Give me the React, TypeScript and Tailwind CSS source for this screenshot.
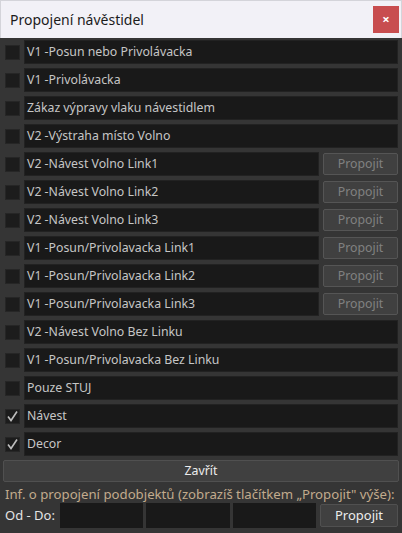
const rows = [
  { label: "V1 -Posun nebo Privolávacka" },
  { label: "V1 -Privolávacka" },
  { label: "Zákaz výpravy vlaku návestidlem" },
  { label: "V2 -Výstraha místo Volno" },
  { label: "V2 -Návest Volno Link1", link: true },
  { label: "V2 -Návest Volno Link2", link: true },
  { label: "V2 -Návest Volno Link3", link: true },
  { label: "V1 -Posun/Privolavacka Link1", link: true },
  { label: "V1 -Posun/Privolavacka Link2", link: true },
  { label: "V1 -Posun/Privolavacka Link3", link: true },
  { label: "V2 -Návest Volno Bez Linku" },
  { label: "V1 -Posun/Privolavacka Bez Linku" },
  { label: "Pouze STUJ" },
  { label: "Návest", checked: true },
  { label: "Decor", checked: true },
];

function Check({ checked }: { checked?: boolean }) {
  return (
    <div className="flex h-[15px] w-[15px] shrink-0 items-center justify-center bg-[#1c1c1c] shadow-[inset_0_0_0_1px_#262626]">
      {checked && (
        <svg width="13" height="13" viewBox="0 0 13 13">
          <path d="M2 6.5 L5 10.5 L11 1.5" fill="none" stroke="#bdbdbd" strokeWidth="1.6" />
        </svg>
      )}
    </div>
  );
}

export default function App() {
  return (
    <div
      className="flex h-[533px] w-[402px] flex-col overflow-hidden bg-[#353535] text-[12.3px] text-[#c6c6c6]"
      style={{ fontFamily: "'Noto Sans', 'DejaVu Sans', sans-serif" }}
    >
      <div className="flex h-[38px] shrink-0 items-center justify-between border border-b-0 border-[#d4d4da] bg-[#f2f1f7] pl-[9px] pr-[2px]">
        <span className="text-[14px] text-[#1b1b1b]">Propojení návěstidel</span>
        <button className="flex h-[27px] w-[26px] items-center justify-center bg-[#c84d4f] text-[13px] font-bold text-white">
          ×
        </button>
      </div>

      <div className="flex flex-col gap-[4px] pl-[5px] pr-[4px] pt-[2px]">
        {rows.map((row) => (
          <div key={row.label} className="flex h-[24px] items-center gap-[4px]">
            <Check checked={row.checked} />
            <div className="flex h-full flex-1 items-center bg-[#191919] pl-[3px] shadow-[inset_0_0_0_1px_#222]">
              {row.label}
            </div>
            {row.link && (
              <button className="h-[22px] w-[75px] shrink-0 rounded-[2px] border border-[#555] bg-[#404040] text-[#808080]">
                Propojit
              </button>
            )}
          </div>
        ))}
      </div>

      <div className="px-[3px] pt-[4px]">
        <button className="h-[22px] w-full rounded-[2px] border border-[#505050] bg-[#404040] font-normal text-[#ececec]">
          Zavřít
        </button>
      </div>

      <div className="px-[5px] pt-[3px] text-[13.2px] leading-[18px] text-[#c2ab8d]">
        Inf. o propojení podobjektů (zobrazíš tlačítkem „Propojit" výše):
      </div>

      <div className="flex h-[25px] items-center gap-[3px] pl-[5px] pr-[4px]">
        <span className="w-[52px] shrink-0 text-[13px] text-[#e4e4e4]">Od - Do:</span>
        <div className="h-full w-[83px] bg-[#191919]" />
        <div className="h-full w-[84px] bg-[#191919]" />
        <div className="h-full w-[83px] bg-[#191919]" />
        <button className="ml-[1px] h-[23px] flex-1 rounded-[2px] border border-[#505050] bg-[#404040] text-[13px] text-[#ececec]">
          Propojit
        </button>
      </div>
    </div>
  );
}
